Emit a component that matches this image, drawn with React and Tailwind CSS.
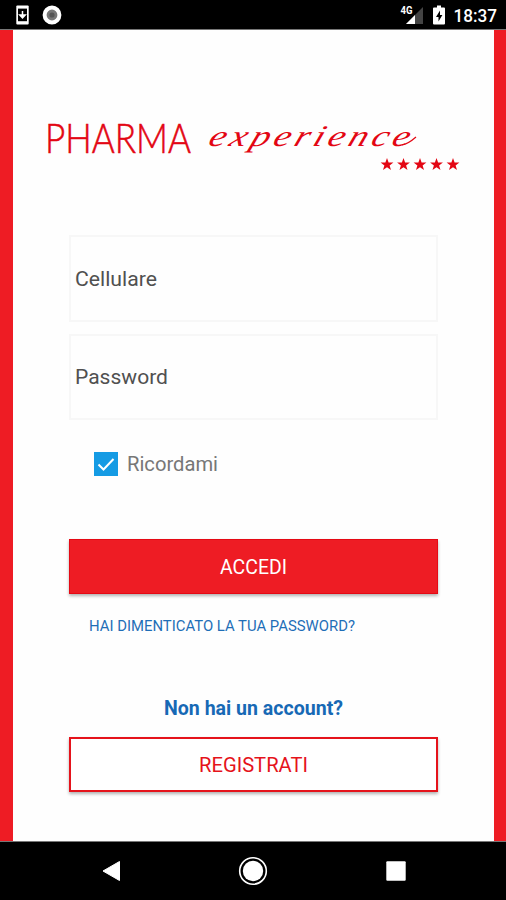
const STAR = "M0 -6.6 L1.6 -2 L6.4 -2 L2.6 0.9 L4 5.6 L0 2.8 L-4 5.6 L-2.6 0.9 L-6.4 -2 L-1.6 -2 Z";

function StatusBar() {
  return (
    <header className="flex h-[30px] shrink-0 items-center justify-between border-b border-[#777] bg-black pl-4 pr-[7px] text-white">
      <div className="flex items-center gap-[13px]">
        <svg width="13" height="20" viewBox="0 0 13 20">
          <rect x="0.3" y="0.5" width="12.4" height="19" rx="1" fill="#fff" />
          <rect x="2" y="3.6" width="9" height="12.6" fill="#000" />
          <path d="M6.5 6v6M3.8 10l2.7 3 2.7-3z" stroke="#fff" strokeWidth="1.5" fill="#fff" />
        </svg>
        <svg width="20" height="20" viewBox="0 0 20 20">
          <circle cx="10" cy="10" r="7.4" fill="#777" stroke="#fff" strokeWidth="4" />
          <circle cx="10" cy="10" r="2.6" fill="#555" />
        </svg>
      </div>
      <div className="flex items-center">
        <svg width="25" height="22" viewBox="0 -1 25 22">
          <path d="M23 2v17H6z" fill="#444" />
          <path d="M15 10v9H6z" fill="#fff" />
          <text x="0.5" y="9" fontSize="10" fontWeight="700" fill="#fff" textLength="12" lengthAdjust="spacingAndGlyphs">4G</text>
        </svg>
        <svg className="ml-2" width="12" height="20" viewBox="0 0 12 20">
          <path d="M4 0.5h4v2h3q1 0 1 1V18.5q0 1-1 1H1q-1 0-1-1V3.5q0-1 1-1h3z" fill="#fff" />
          <path d="M7 5.5L3 12h2.500v4.500L9.400 10H7z" fill="#000" />
        </svg>
        <svg className="ml-[6px]" width="48" height="24" viewBox="-2 -2 48 24">
          <text x="0.5" y="16.5" fontSize="18" fontWeight="500" fill="#fff" textLength="43.5" lengthAdjust="spacingAndGlyphs">18:37</text>
        </svg>
      </div>
    </header>
  );
}

function Logo() {
  return (
    <svg className="ml-[27px] mt-[80px] shrink-0" width="430" height="70" viewBox="40 110 430 70" fill="#e30613">
      <text x="45" y="153" fontSize="41.5" textLength="146" lengthAdjust="spacingAndGlyphs" stroke="#e30613" strokeWidth="0.6" className="font-['Lato'] font-light">PHARMA</text>
      <g transform="translate(207 146) skewX(-20) scale(1.25 1)">
        <text x="0" y="0" fontSize="30" textLength="160" className="font-['Liberation_Serif'] italic">experience</text>
      </g>
      <path d="M402 145Q408 144 416 137" fill="none" stroke="#e30613" strokeWidth="1.2" />
      {[387, 403.5, 420, 436.5, 453].map((x) => (
        <path key={x} d={STAR} transform={`translate(${x} 164.5)`} />
      ))}
    </svg>
  );
}

// Each label reserves a 3px bleed on both sides so glyph edges are never clipped.
function Label({ width, size, children, className = "" }) {
  return (
    <div className={className}>
      <svg className="-mx-[3px] block shrink-0" width={width + 6} height="30" viewBox={`-3 0 ${width + 6} 30`} fill="currentColor">
        <text x="0" y="22" fontSize={size} textLength={width} lengthAdjust="spacingAndGlyphs">{children}</text>
      </svg>
    </div>
  );
}

export default function App() {
  return (
    <div className="flex h-[900px] w-[506px] flex-col overflow-hidden bg-white font-['Roboto',sans-serif]">
      <StatusBar />
      <main className="flex h-[811px] shrink-0 flex-col border-l-[13px] border-r-[12px] border-[#ee1c24] bg-[#fefefe]">
        <Logo />
        <form className="ml-[56px] flex w-[369px] flex-col">
          <div className="mt-[55px] flex h-[87px] items-center border-2 border-[#f7f7f7] pl-1">
            <Label className="text-[#505050]" width={82} size={21}>Cellulare</Label>
          </div>
          <div className="mt-3 flex h-[86px] items-center border-2 border-[#f7f7f7] pl-1">
            <Label className="text-[#505050]" width={93} size={21}>Password</Label>
          </div>
          <div className="ml-[25px] mt-[29px] flex h-[30px] items-center gap-[9px]">
            <svg width="24" height="24" viewBox="0 0 24 24">
              <rect width="24" height="24" fill="#159be4" />
              <path d="M4.500 12.500L9.500 17.500L19.500 7" fill="none" stroke="#fff" strokeWidth="2" />
            </svg>
            <Label className="text-[#777]" width={91} size={21}>Ricordami</Label>
          </div>
          <div className="mt-[60px] flex h-[55px] items-center justify-center border border-[#e50914] bg-[#ee1c24] text-white shadow-[0_2px_3px_rgba(0,0,0,0.3)]">
            <Label width={67} size={20.5}>ACCEDI</Label>
          </div>
          <Label className="ml-[20px] mt-[15px] text-[#1f6eb7]" width={266} size={15.5}>HAI DIMENTICATO LA TUA PASSWORD?</Label>
          <Label className="ml-[95px] mt-[54px] font-bold text-[#1769b5]" width={179} size={19.5}>Non hai un account?</Label>
          <div className="mt-[14px] flex h-[55px] items-center justify-center border-2 border-[#e5131b] bg-white text-[#e5131b] shadow-[0_2px_3px_rgba(0,0,0,0.3)]">
            <Label width={109} size={20.5}>REGISTRATI</Label>
          </div>
        </form>
      </main>
      <nav className="flex h-[59px] shrink-0 items-center justify-between border-t border-[#777] bg-black pl-[102px] pr-[100px]">
        <svg width="19" height="22" viewBox="0 0 19 22" fill="#fff">
          <path d="M17.5 1.500v19L1 11z" stroke="#fff" strokeWidth="1" strokeLinejoin="round" />
        </svg>
        <svg className="-ml-px" width="30" height="30" viewBox="0 0 30 30">
          <circle cx="15" cy="15" r="13.300" fill="none" stroke="#fff" strokeWidth="1.600" />
          <circle cx="15" cy="15" r="10.200" fill="#fff" />
        </svg>
        <svg width="20" height="20" viewBox="0 0 20 20">
          <rect x="0.300" y="0.300" width="19.400" height="19.400" rx="1" fill="#fff" />
        </svg>
      </nav>
    </div>
  );
}
